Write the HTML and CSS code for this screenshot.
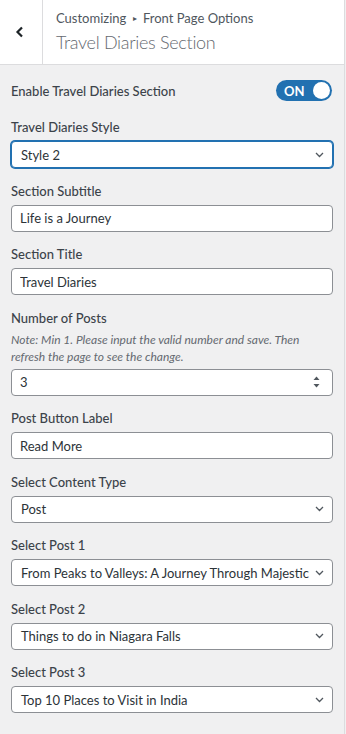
FILE: index.html
```html
<!DOCTYPE html>
<html lang="en">
<head>
    <meta charset="UTF-8">
    <title>Travel Diaries Section</title>
    <link rel="stylesheet" href="styles.css">
</head>
<body>
    <div class="panel">
        <header class="panel-header">
            <button class="back-btn" aria-label="Back">
                <svg width="10" height="12" viewBox="0 0 10 12"><path d="M7 1.5 L2.5 6 L7 10.5" fill="none" stroke="#1d2327" stroke-width="2.2"/></svg>
            </button>
            <div class="panel-title">
                <div class="crumbs">Customizing <span class="sep">&#9656;</span> Front Page Options</div>
                <h1>Travel Diaries Section</h1>
            </div>
        </header>

        <div class="controls">
            <div class="control control-toggle">
                <span class="control-title">Enable Travel Diaries Section</span>
                <span class="toggle"><span class="toggle-text">ON</span><span class="knob"></span></span>
            </div>

            <div class="control">
                <span class="control-title">Travel Diaries Style</span>
                <div class="field select focused"><span class="value">Style 2</span><svg class="chev" width="9" height="6" viewBox="0 0 9 6"><path d="M1 1 L4.5 4.5 L8 1" fill="none" stroke="#50575e" stroke-width="1.3"/></svg></div>
            </div>

            <div class="control">
                <span class="control-title">Section Subtitle</span>
                <div class="field"><span class="value">Life is a Journey</span></div>
            </div>

            <div class="control">
                <span class="control-title">Section Title</span>
                <div class="field"><span class="value">Travel Diaries</span></div>
            </div>

            <div class="control">
                <span class="control-title">Number of Posts</span>
                <p class="description">Note: Min 1. Please input the valid number and save. Then refresh the page to see the change.</p>
                <div class="field number"><span class="value">3</span>
                    <span class="spinner">
                        <svg width="7" height="4" viewBox="0 0 7 4"><path d="M0.5 4 L3.5 0.5 L6.5 4 Z" fill="#50575e"/></svg>
                        <svg width="7" height="4" viewBox="0 0 7 4"><path d="M0.5 0 L3.5 3.5 L6.5 0 Z" fill="#50575e"/></svg>
                    </span>
                </div>
            </div>

            <div class="control">
                <span class="control-title">Post Button Label</span>
                <div class="field"><span class="value">Read More</span></div>
            </div>

            <div class="control">
                <span class="control-title">Select Content Type</span>
                <div class="field select"><span class="value">Post</span><svg class="chev" width="9" height="6" viewBox="0 0 9 6"><path d="M1 1 L4.5 4.5 L8 1" fill="none" stroke="#50575e" stroke-width="1.3"/></svg></div>
            </div>

            <div class="control">
                <span class="control-title">Select Post 1</span>
                <div class="field select"><span class="value">From Peaks to Valleys: A Journey Through Majestic Landscapes</span><svg class="chev" width="9" height="6" viewBox="0 0 9 6"><path d="M1 1 L4.5 4.5 L8 1" fill="none" stroke="#50575e" stroke-width="1.3"/></svg></div>
            </div>

            <div class="control">
                <span class="control-title">Select Post 2</span>
                <div class="field select"><span class="value">Things to do in Niagara Falls</span><svg class="chev" width="9" height="6" viewBox="0 0 9 6"><path d="M1 1 L4.5 4.5 L8 1" fill="none" stroke="#50575e" stroke-width="1.3"/></svg></div>
            </div>

            <div class="control">
                <span class="control-title">Select Post 3</span>
                <div class="field select"><span class="value">Top 10 Places to Visit in India</span><svg class="chev" width="9" height="6" viewBox="0 0 9 6"><path d="M1 1 L4.5 4.5 L8 1" fill="none" stroke="#50575e" stroke-width="1.3"/></svg></div>
            </div>
        </div>
    </div>
</body>
</html>
```

FILE: styles.css
```css
* {
    margin: 0;
    padding: 0;
    box-sizing: border-box;
}

body {
    font-family: 'Lato', 'Open Sans', sans-serif;
    background: #f0f0f1;
    color: #3c434a;
    width: 346px;
    height: 734px;
    overflow: hidden;
}

.panel {
    width: 345px;
    min-height: 734px;
    border-right: 1px solid #dcdcde;
}

.panel-header {
    display: flex;
    height: 65px;
    background: #fff;
    border-bottom: 1px solid #dcdcde;
}

.back-btn {
    width: 43px;
    border: none;
    border-right: 1px solid #dcdcde;
    background: #fff;
    display: flex;
    align-items: center;
    justify-content: center;
    padding-right: 2px;
}

.panel-title {
    padding: 10px 0 0 13px;
}

.crumbs {
    font-size: 13px;
    line-height: 17px;
    color: #50575e;
}

.crumbs .sep {
    font-size: 8px;
    vertical-align: 2px;
    margin: 0 3px;
}

.panel-title h1 {
    font-size: 18px;
    font-weight: 300;
    letter-spacing: -0.3px;
    line-height: 26px;
    color: #646970;
    margin-top: 2px;
}

.controls {
    display: flex;
    flex-direction: column;
    gap: 13.5px;
    padding: 15px 11px 0 11px;
}

.control {
    display: flex;
    flex-direction: column;
    gap: 5px;
}

.control-toggle {
    flex-direction: row;
    align-items: center;
    justify-content: space-between;
    padding-right: 1px;
    margin-bottom: 3.5px;
}

.control-title {
    font-size: 13px;
    font-weight: 500;
    line-height: 18px;
    color: #3c434a;
}

.toggle {
    width: 56px;
    height: 21px;
    border-radius: 11px;
    background: #2271b1;
    display: flex;
    align-items: center;
    justify-content: space-between;
    padding: 0 2px 0 8px;
}

.toggle-text {
    color: #fff;
    font-weight: 700;
    font-size: 13px;
}

.knob {
    width: 17px;
    height: 17px;
    border-radius: 50%;
    background: #fff;
}

.description {
    font-size: 12px;
    font-style: italic;
    line-height: 17px;
    color: #646970;
    margin: -1px 0;
}

.field {
    height: 27px;
    background: #fff;
    border: 1px solid #8c8f94;
    border-radius: 4px;
    display: flex;
    align-items: center;
    padding: 0 8px 0 8px;
    font-size: 13px;
    color: #2c3338;
}

.field .value {
    flex: 1;
    white-space: nowrap;
    overflow: hidden;
}

.select {
    padding-right: 8px;
}

.select .value {
    padding-left: 1px;
}

.chev {
    margin-left: 4px;
    flex-shrink: 0;
}

.focused {
    border-color: #2271b1;
    box-shadow: 0 0 0 1px #2271b1;
}

.spinner {
    display: flex;
    flex-direction: column;
    gap: 4px;
    margin-right: 4px;
}

.spinner svg {
    display: block;
}
```
